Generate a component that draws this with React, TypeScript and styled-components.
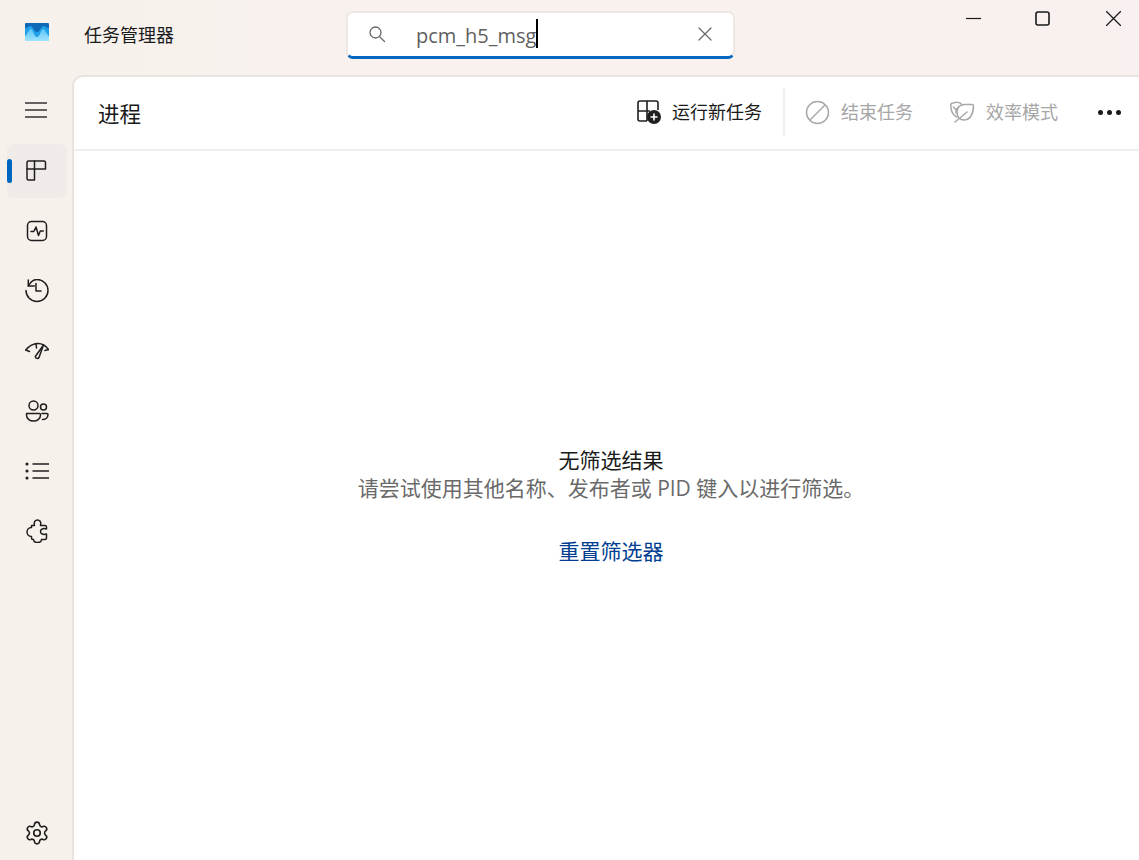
import React from "react";
import styled, { createGlobalStyle } from "styled-components";
import { Settings } from "lucide-react";

const FONT = `"Open Sans", "Noto Sans CJK SC", "Noto Sans", sans-serif`;

const Global = createGlobalStyle`
  html, body { margin: 0; padding: 0; height: 100%; background: #f8f1ed; overflow: hidden; }
  #root { height: 100%; }
`;

const Win = styled.div`
  width: 1139px;
  height: 860px;
  display: flex;
  flex-direction: column;
  overflow: hidden;
  font-family: ${FONT};
  background: linear-gradient(90deg, #f7f1ec 0%, #f9f1ef 100%);
  color: #1a1a1a;
`;

const TitleBar = styled.header`
  height: 75px;
  flex: none;
  display: flex;
  align-items: flex-start;
`;

const LogoWrap = styled.div`
  width: 24px;
  height: 18px;
  margin: 23px 0 0 25px;
  flex: none;
  line-height: 0;
`;

const AppTitle = styled.div`
  margin: 22px 0 0 35px;
  width: 262px;
  flex: none;
  font-size: 18px;
  line-height: 26px;
  color: #1a1a1a;
`;

const SearchBox = styled.div`
  margin: 11px 0 0 0;
  width: 389px;
  height: 48px;
  flex: none;
  box-sizing: border-box;
  border: 2px solid #efe7e3;
  border-bottom: 3px solid #0067c0;
  border-radius: 7px;
  background: #fff;
  display: flex;
  align-items: center;
  padding: 0 21px 2px 20px;
`;

const SearchIconWrap = styled.span`
  width: 48px;
  flex: none;
  display: flex;
  line-height: 0;
`;

const SearchText = styled.span`
  font-size: 20px;
  line-height: 28px;
  color: #5f5f5f;
  margin-top: 4px;
`;

const Caret = styled.span`
  width: 2px;
  height: 29px;
  background: #000;
  flex: none;
`;

const ClearBtn = styled.span`
  margin-left: auto;
  display: flex;
  line-height: 0;
`;

const WinControls = styled.div`
  margin-left: auto;
  padding: 11px 18px 0 0;
  display: flex;
  gap: 55px;
`;

const WinBtn = styled.span<{ $nudge?: number }>`
  width: 15px;
  height: 15px;
  display: block;
  line-height: 0;
  margin-left: ${(p) => p.$nudge ?? 0}px;
  margin-right: ${(p) => -(p.$nudge ?? 0)}px;
`;

const Body = styled.div`
  flex: 1;
  min-height: 0;
  display: flex;
`;

const Sidebar = styled.nav`
  width: 72px;
  flex: none;
  box-sizing: border-box;
  padding: 8px 5px 0 7px;
  display: flex;
  flex-direction: column;
  gap: 6px;
`;

const NavItem = styled.div<{ $active?: boolean; $bottom?: boolean; $menu?: boolean }>`
  position: relative;
  height: 54px;
  flex: none;
  border-radius: 6px;
  display: flex;
  align-items: center;
  justify-content: center;
  background: ${(p) => (p.$active ? "#f0ebe8" : "transparent")};
  margin-top: ${(p) => (p.$bottom ? "auto" : "0")};
  margin-bottom: ${(p) => (p.$menu ? "1px" : "0")};
  color: #1f1f1f;
`;

const ActiveMark = styled.span`
  position: absolute;
  left: 0;
  top: 15px;
  width: 5px;
  height: 24px;
  border-radius: 3px;
  background: #0067c0;
`;

const Card = styled.main`
  flex: 1;
  min-width: 0;
  background: #fff;
  border-top: 2px solid #e9e4e0;
  border-left: 2px solid #e9e4e0;
  border-top-left-radius: 11px;
  display: flex;
  flex-direction: column;
`;

const CardHeader = styled.div`
  height: 72px;
  flex: none;
  border-bottom: 2px solid #f0eeee;
  display: flex;
  align-items: center;
  padding: 0 18px 0 24px;
`;

const PageTitle = styled.h1`
  margin: 1px 0 0;
  font-size: 21.5px;
  font-weight: 400;
  line-height: 30px;
  color: #1a1a1a;
`;

const Toolbar = styled.div`
  margin-left: auto;
  margin-bottom: 2px;
  display: flex;
  align-items: center;
`;

const ToolBtn = styled.div<{ $disabled?: boolean; $w: number; $gap?: number }>`
  width: ${(p) => p.$w}px;
  display: flex;
  align-items: center;
  gap: ${(p) => p.$gap ?? 11}px;
  font-size: 18px;
  line-height: 26px;
  color: ${(p) => (p.$disabled ? "#a6a6a6" : "#1a1a1a")};
`;

const ToolIcon = styled.span`
  width: 25px;
  height: 25px;
  flex: none;
  line-height: 0;
`;

const Divider = styled.span`
  width: 2px;
  height: 48px;
  background: #efefef;
  margin: 0 20px 0 0;
  flex: none;
`;

const More = styled.span`
  display: flex;
  gap: 4px;
  margin-top: 1px;
`;

const Dot = styled.span`
  width: 5px;
  height: 5px;
  border-radius: 50%;
  background: #1a1a1a;
`;

const Empty = styled.div`
  flex: 1;
  display: flex;
  flex-direction: column;
  align-items: center;
  justify-content: center;
  padding: 0 0 0 9px;
`;

const EmptyTitle = styled.div`
  font-size: 21px;
  line-height: 28px;
  color: #1a1a1a;
`;

const EmptyDesc = styled.div`
  font-size: 21px;
  line-height: 28px;
  color: #6a6a6a;
`;

const ResetLink = styled.a`
  margin-top: 35px;
  font-size: 21px;
  line-height: 28px;
  color: #003e92;
`;

const Ico: React.FC<{ size?: number; color?: string; sw?: number; vb?: string; children: React.ReactNode }> = ({
  size = 24,
  color = "#1f1f1f",
  sw = 1.5,
  vb = "0 0 24 24",
  children,
}) => (
  <svg width={size} height={size} viewBox={vb} fill="none" stroke={color} strokeWidth={sw} strokeLinecap="round" strokeLinejoin="round">
    {children}
  </svg>
);

const Logo = () => (
  <svg width="24" height="18" viewBox="0 0 24 18">
    <defs>
      <linearGradient id="logoLight" x1="0" y1="0" x2="0" y2="1">
        <stop offset="0" stopColor="#5cc4f6" />
        <stop offset="1" stopColor="#9fe3ff" />
      </linearGradient>
    </defs>
    <rect width="24" height="18" fill="#0f68b5" rx="1" />
    <path d="M0 5.5 C2 5.5 3 3 5.5 3 C8 3 9 9 12 9 C15 9 16 3 18.5 3 C21 3 22 5.5 24 5.5 V18 H0Z" fill="#1e9fe8" />
    <path d="M0 13 C2 12 4 6 6 6 C8 6 9 14 12 14 C15 14 16 6 18 6 C20 6 22 12 24 13 V18 H0Z" fill="url(#logoLight)" />
  </svg>
);

export default function App() {
  return (
    <Win>
      <Global />
      <TitleBar>
        <LogoWrap>
          <Logo />
        </LogoWrap>
        <AppTitle>任务管理器</AppTitle>
        <SearchBox>
          <SearchIconWrap>
            <Ico size={18} color="#666" sw={1.3} vb="0 0 18 18">
              <circle cx="7.5" cy="7.5" r="5.5" />
              <path d="M11.6 11.6 L16.5 16.5" />
            </Ico>
          </SearchIconWrap>
          <SearchText>pcm_h5_msg</SearchText>
          <Caret />
          <ClearBtn>
            <Ico size={14} color="#666" sw={1.2} vb="0 0 14 14">
              <path d="M1 1 L13 13 M13 1 L1 13" />
            </Ico>
          </ClearBtn>
        </SearchBox>
        <WinControls>
          <WinBtn>
            <Ico size={15} color="#1a1a1a" sw={1.2} vb="0 0 15 15">
              <path d="M0 7.5 H15" strokeLinecap="butt" />
            </Ico>
          </WinBtn>
          <WinBtn $nudge={-1}>
            <Ico size={15} color="#1a1a1a" sw={1.6} vb="0 0 15 15">
              <rect x="1" y="1" width="13" height="13" rx="2" />
            </Ico>
          </WinBtn>
          <WinBtn>
            <Ico size={15} color="#1a1a1a" sw={1.3} vb="0 0 15 15">
              <path d="M0.5 0.5 L14.5 14.5 M14.5 0.5 L0.5 14.5" />
            </Ico>
          </WinBtn>
        </WinControls>
      </TitleBar>
      <Body>
        <Sidebar>
          <NavItem $menu>
            <Ico size={24} color="#333" sw={1.4}>
              <path d="M0 5 H22 M0 12 H22 M0 19 H22" strokeLinecap="butt" />
            </Ico>
          </NavItem>
          <NavItem $active>
            <ActiveMark />
            <Ico>
              <path d="M2 3.5 a1.5 1.5 0 0 1 1.5 -1.5 H19 a1.5 1.5 0 0 1 1.5 1.5 V10 H2 Z" />
              <path d="M2 10 V19.5 a1.5 1.5 0 0 0 1.5 1.5 H9.5 V2" />
            </Ico>
          </NavItem>
          <NavItem>
            <Ico>
              <rect x="2.5" y="2.5" width="19" height="19" rx="4" />
              <path d="M6 12.5 H8.8 L11 8 L13.5 16.5 L15.3 12 H18.3" />
            </Ico>
          </NavItem>
          <NavItem>
            <Ico>
              <path d="M3.3 1 V7 H9.3" />
              <path d="M3.3 7 C5.5 3 8.5 0.5 12 0.5 A11 11 0 1 1 1 11.5" />
              <path d="M11 4.5 V12 H16" />
            </Ico>
          </NavItem>
          <NavItem>
            <Ico>
              <path d="M0.8 11 C4 7 8 4.5 13 4.5 C17 4.5 21 7 23.5 10.5" />
              <path d="M0.8 11 L4.5 12.5 M23.5 10.5 L20 11.5 M11 4.5 L11.5 9" />
              <path d="M18.5 6 L14 18.5 A2 2 0 0 1 10.3 17.5 Z" fill="#f7f1ec" />
            </Ico>
          </NavItem>
          <NavItem>
            <Ico>
              <circle cx="8.5" cy="6.5" r="4.5" />
              <circle cx="18.5" cy="8" r="3" />
              <path d="M1.5 14.5 H14.5 A1 1 0 0 1 15.5 15.5 V16 C15.5 19.5 12.5 22 8.5 22 C4.5 22 1.5 19.5 1.5 16 V15.5 A1 1 0 0 1 2.5 14.5 Z" />
              <path d="M17 14.5 H22 A1 1 0 0 1 23 15.5 C23 18.5 20.5 20.5 17.5 20.5" />
            </Ico>
          </NavItem>
          <NavItem>
            <Ico>
              <path d="M7.5 5 H24 M7.5 12 H24 M7.5 19 H24" strokeLinecap="butt" />
              <circle cx="2" cy="5" r="0.8" fill="#1f1f1f" />
              <circle cx="2" cy="12" r="0.8" fill="#1f1f1f" />
              <circle cx="2" cy="19" r="0.8" fill="#1f1f1f" />
            </Ico>
          </NavItem>
          <NavItem>
            <Ico>
              <path d="M6.5 6.5 H9.5 C8.5 2.5 10.5 1 12.5 1 C14.5 1 16.5 2.5 15.5 6.5 H20 a1.5 1.5 0 0 1 1.5 1.5 V10 C18 9 15.5 10 15.5 12.5 C15.5 15 18 16 21.5 15 V19 a1.5 1.5 0 0 1 -1.5 1.5 H16.5 C16.5 22 15 23.5 12.5 23.5 C10 23.5 8.5 22 8.5 20.5 H8 a1.5 1.5 0 0 1 -1.5 -1.5 V17.5 C3.5 17.5 2 15 2 13 C2 11 3.5 8.5 6.5 8.5 Z" />
            </Ico>
          </NavItem>
          <NavItem $bottom>
            <Settings size={26} strokeWidth={1.5} color="#1f1f1f" />
          </NavItem>
        </Sidebar>
        <Card>
          <CardHeader>
            <PageTitle>进程</PageTitle>
            <Toolbar>
              <ToolBtn $w={146} $gap={10}>
                <ToolIcon>
                  <svg width="25" height="25" viewBox="0 0 25 25" fill="none" stroke="#1f1f1f" strokeWidth="1.6" strokeLinejoin="round">
                    <path d="M10 21 H3 a2 2 0 0 1 -2 -2 V3 a2 2 0 0 1 2 -2 H19 a2 2 0 0 1 2 2 V10" />
                    <path d="M1 11 H10 V21 M10 1 V11 H13" />
                    <circle cx="17" cy="17" r="7" fill="#1f1f1f" stroke="none" />
                    <path d="M17 13.5 V20.5 M13.5 17 H20.5" stroke="#fff" strokeWidth="1.6" />
                  </svg>
                </ToolIcon>
                运行新任务
              </ToolBtn>
              <Divider />
              <ToolBtn $disabled $w={145}>
                <ToolIcon>
                  <svg width="25" height="25" viewBox="0 0 25 25" fill="none" stroke="#a8a8a8" strokeWidth="1.5">
                    <circle cx="12.5" cy="12.5" r="11" />
                    <path d="M5 20 L20 5" />
                  </svg>
                </ToolIcon>
                结束任务
              </ToolBtn>
              <ToolBtn $disabled $w={148}>
                <ToolIcon>
                  <svg width="25" height="25" viewBox="0 0 25 25" fill="none" stroke="#a8a8a8" strokeWidth="1.5" strokeLinejoin="round" strokeLinecap="round">
                    <path d="M12.5 5 C10 2 6 2 3 3 C2 3 0.8 3.5 0.8 5 C0.8 10 2 15 7 17" />
                    <path d="M23.5 6 C23.5 5 23 4.5 22 4.5 H14 C9.5 4.5 7 8 7 12 C7 17 10 20 14 20 C20 20 23.5 14 23.5 6 Z" />
                    <path d="M5 22 L17 12" />
                    <path d="M3.5 7 L6 10 L8.5 7 M6 10 V13" />
                  </svg>
                </ToolIcon>
                效率模式
              </ToolBtn>
              <More>
                <Dot />
                <Dot />
                <Dot />
              </More>
            </Toolbar>
          </CardHeader>
          <Empty>
            <EmptyTitle>无筛选结果</EmptyTitle>
            <EmptyDesc>请尝试使用其他名称、发布者或 PID 键入以进行筛选。</EmptyDesc>
            <ResetLink>重置筛选器</ResetLink>
          </Empty>
        </Card>
      </Body>
    </Win>
  );
}
